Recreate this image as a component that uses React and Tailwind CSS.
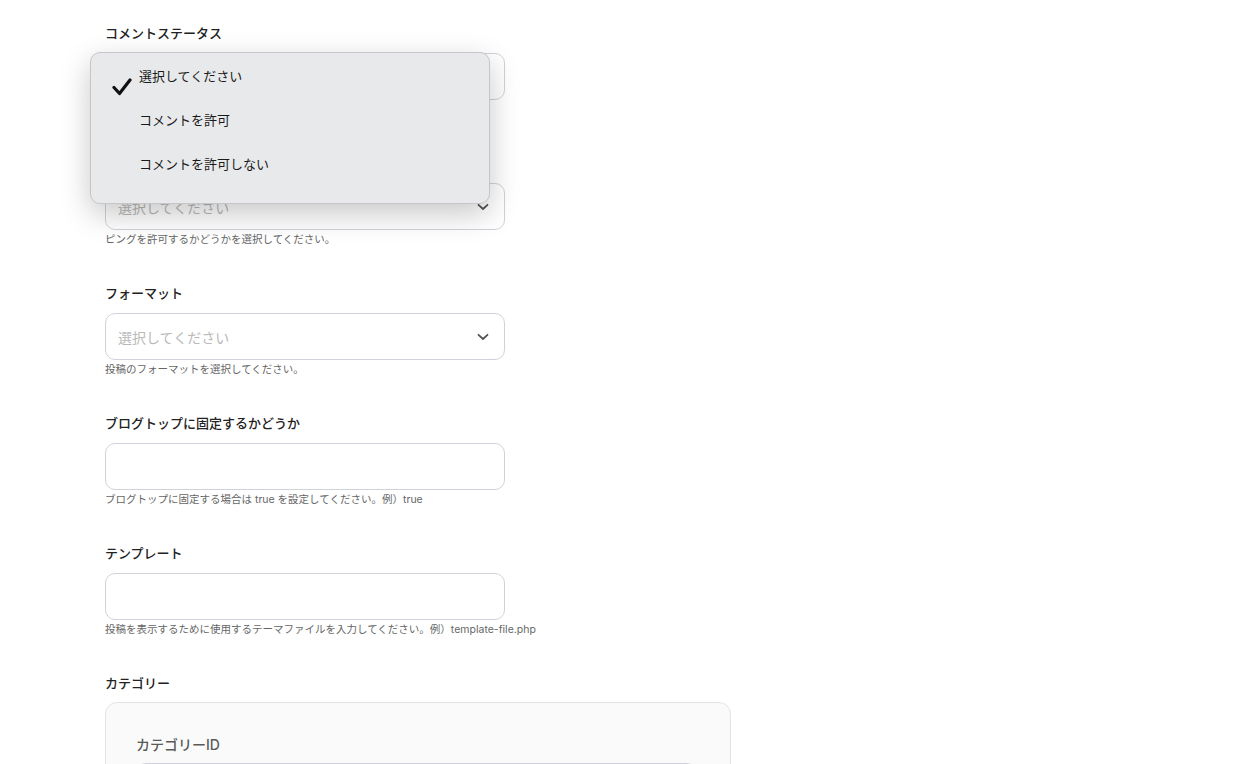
import React from "react";

const font = { fontFamily: 'Inter, "Noto Sans CJK JP", sans-serif' };

function Chevron() {
  return (
    <svg width="12" height="8" viewBox="0 0 12 8" fill="none" className="shrink-0">
      <path d="M1.5 1.8 L6 6 L10.5 1.8" stroke="#555" strokeWidth="1.8" strokeLinecap="round" strokeLinejoin="round" />
    </svg>
  );
}

function Field({ label, type, help, mt }) {
  return (
    <div className={mt}>
      <div className="text-[13px] leading-[20px] font-medium text-[#222]">{label}</div>
      <div className="mt-[10px] w-[400px] h-[47px] rounded-[10px] border border-[#cfd3d9] bg-white flex items-center justify-between pl-[12px] pr-[15px]">
        {type === "select" ? (
          <>
            <span className="text-[14px] text-[#b9b9b9] pt-[1px]">選択してください</span>
            <Chevron />
          </>
        ) : null}
      </div>
      <div className="mt-[2px] text-[10.5px] leading-[16px] text-[#666]">{help}</div>
    </div>
  );
}

export default function App() {
  return (
    <div className="relative w-[1250px] h-[764px] overflow-hidden bg-white" style={font}>
      <div className="pl-[105px] pt-[23px]">
        <Field label="コメントステータス" type="select" help="コメントを許可するかどうかを選択してください。" />
        <Field label="ピングステータス" type="select" help="ピングを許可するかどうかを選択してください。" mt="mt-[35px]" />
        <Field label="フォーマット" type="select" help="投稿のフォーマットを選択してください。" mt="mt-[35px]" />
        <Field label="ブログトップに固定するかどうか" type="text" help="ブログトップに固定する場合は true を設定してください。例）true" mt="mt-[35px]" />
        <Field label="テンプレート" type="text" help="投稿を表示するために使用するテーマファイルを入力してください。例）template-file.php" mt="mt-[35px]" />
        <div className="mt-[35px]">
          <div className="text-[13px] leading-[20px] font-medium text-[#222]">カテゴリー</div>
          <div className="mt-[9px] w-[626px] h-[200px] rounded-[12px] border border-[#e4e4e4] bg-[#fafafa] pl-[30px] pr-[33px] pt-[32px]">
            <div className="text-[14px] leading-[20px] font-medium text-[#5a5a5a]">カテゴリーID</div>
            <div className="mt-[8px] h-[46px] rounded-[10px] border border-[#cfd3d9] bg-white" />
          </div>
        </div>
      </div>

      {/* native select menu overlay */}
      <div className="absolute left-[90px] top-[52px] w-[400px] h-[152px] rounded-[10px] bg-[#e8e9eb] border border-[#c6c6c8] shadow-[0_10px_30px_rgba(0,0,0,0.22)] pt-[12px]">
        <div className="relative h-[44px] pl-[48px] text-[13px] leading-[22px] text-[#1a1a1a]">
          <svg className="absolute left-[21px] top-[13px]" width="20" height="18" viewBox="0 0 20 18" fill="none">
            <path d="M2 9.5 L7.5 15.5 L18 2" stroke="#111" strokeWidth="3.2" strokeLinecap="round" strokeLinejoin="round" />
          </svg>
          選択してください
        </div>
        <div className="h-[44px] pl-[48px] text-[13px] leading-[22px] text-[#1a1a1a]">コメントを許可</div>
        <div className="h-[44px] pl-[48px] text-[13px] leading-[22px] text-[#1a1a1a]">コメントを許可しない</div>
      </div>
    </div>
  );
}
